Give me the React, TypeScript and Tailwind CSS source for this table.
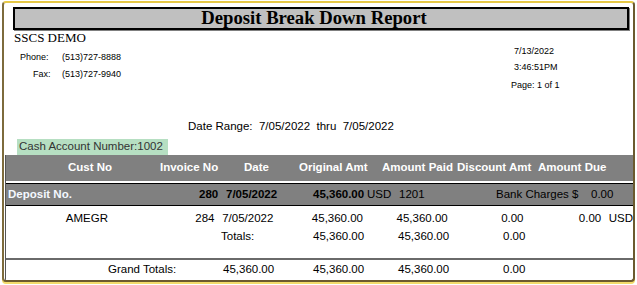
import React from 'react';

const sans = "font-['Liberation_Sans',Arial,sans-serif]";
const serif = "font-['Liberation_Serif','Times_New_Roman',serif]";

/**
 * Deposit Break Down Report
 */
export default function App() {
    return (
        <div className={`w-[637px] h-[285px] bg-white overflow-hidden ${sans}`}>
            <div className="ml-[2px] mt-[1px] w-[633px] h-[281px] bg-white border-t-2 border-l-2 border-r-2 border-b-2 border-t-[#e6c847] border-l-[#7d6b3c] border-r-[#6b5a2e] border-b-[#6b5a2e] rounded-[4px] shadow-[0_2px_0_#f3dc6a] overflow-hidden">
                {/* Title */}
                <div className="ml-[9px] mt-[4px] w-[616px] h-[23px] bg-[#c0c0c0] border-2 border-black shadow-[1px_1px_0_#808080] flex items-center justify-center">
                    <h1 className={`${serif} text-[18.7px] font-bold leading-none text-black pr-[14px]`}>Deposit Break Down Report</h1>
                </div>

                {/* Company / print info */}
                <div className="flex h-[86px]">
                    <div className="w-[480px]">
                        <div className={`${serif} ml-[10px] text-[13px] leading-[14px] mt-[1px] text-black`}>SSCS DEMO</div>
                        <div className="flex text-[9px] leading-[11px] text-black mt-[7px]">
                            <span className="w-[58px] pl-[16px]">Phone:</span>
                            <span>(513)727-8888</span>
                        </div>
                        <div className="flex text-[9px] leading-[11px] text-black mt-[6px]">
                            <span className="w-[58px] pl-[29px]">Fax:</span>
                            <span>(513)727-9940</span>
                        </div>
                    </div>
                    <div className="flex flex-col text-[9px] leading-[11px] text-black pl-[27px]">
                        <span className="mt-[16px] pl-[3px]">7/13/2022</span>
                        <span className="mt-[5px] pl-[3px]">3:46:51PM</span>
                        <span className="mt-[7px]">Page: 1 of 1</span>
                    </div>
                </div>

                {/* Date range */}
                <div className="h-[22px] flex items-center pl-[184px] text-[11.5px] text-black whitespace-pre">
                    {'Date Range:  7/05/2022  thru  7/05/2022'}
                </div>

                {/* Cash account */}
                <div className="ml-[13px] mt-[1px] w-[151px] h-[16px] bg-[#b6dfc2] flex items-center pl-[2px] text-[11.5px] text-[#333]">
                    Cash Account Number:1002
                </div>

                {/* Table */}
                <div className="ml-[1px] w-[628px] border-l border-[#555] text-[11.5px]">
                    <div className="h-[26px] bg-[#808080] flex items-center font-bold text-white whitespace-nowrap">
                        <span className="w-[62px]" />
                        <span className="w-[92px]">Cust No</span>
                        <span className="w-[84px]">Invoice No</span>
                        <span className="w-[55px]">Date</span>
                        <span className="w-[83px]">Original Amt</span>
                        <span className="w-[75px]">Amount Paid</span>
                        <span className="w-[81px]">Discount Amt</span>
                        <span>Amount Due</span>
                    </div>
                    <div className="h-[2px] bg-white" />
                    <div className="h-[23px] bg-[#808080] border-t border-b border-black flex items-center whitespace-nowrap text-black">
                        <span className="w-[193px] pl-[2px] font-bold text-[#f4f8ff]">Deposit No.</span>
                        <span className="w-[27px] font-bold">280</span>
                        <span className="w-[87px] font-bold">7/05/2022</span>
                        <span className="w-[54px] font-bold">45,360.00</span>
                        <span className="w-[32px]">USD</span>
                        <span className="w-[97px]">1201</span>
                        <span className="w-[95px]">Bank Charges $</span>
                        <span>0.00</span>
                    </div>
                    <div className="h-[23px] flex items-center whitespace-nowrap text-black mt-[1px]">
                        <span className="w-[60px]" />
                        <span className="w-[130px]">AMEGR</span>
                        <span className="w-[27px]">284</span>
                        <span className="w-[90px]">7/05/2022</span>
                        <span className="w-[85px]">45,360.00</span>
                        <span className="w-[105px]">45,360.00</span>
                        <span className="w-[78px]">0.00</span>
                        <span className="w-[30px]">0.00</span>
                        <span>USD</span>
                    </div>
                    <div className="h-[14px] flex items-center whitespace-nowrap text-black">
                        <span className="w-[215px]" />
                        <span className="w-[92px]">Totals:</span>
                        <span className="w-[85px]">45,360.00</span>
                        <span className="w-[105px]">45,360.00</span>
                        <span>0.00</span>
                    </div>
                    <div className="h-[14px]" />
                    <div className="border-t-2 border-[#6a6a6a] h-[22px] flex items-center whitespace-nowrap text-black">
                        <span className="w-[102px]" />
                        <span className="w-[115px]">Grand Totals:</span>
                        <span className="w-[90px]">45,360.00</span>
                        <span className="w-[85px]">45,360.00</span>
                        <span className="w-[105px]">45,360.00</span>
                        <span>0.00</span>
                    </div>
                </div>
            </div>
        </div>
    );
}
